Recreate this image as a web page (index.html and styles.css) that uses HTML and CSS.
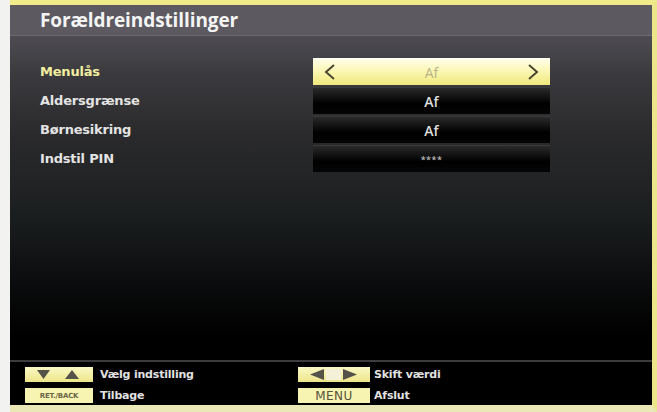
FILE: index.html
```html
<!DOCTYPE html>
<html lang="da">
<head>
<meta charset="utf-8">
<title>Forældreindstillinger</title>
<link rel="stylesheet" href="styles.css">
</head>
<body>
<div class="screen">
  <div class="edge"></div>
  <div class="panel">
    <div class="titlebar"><h1 class="title">Forældreindstillinger</h1></div>
    <div class="content">
      <div class="rows">
        <div class="row">
          <span class="label active">Menulås</span>
          <div class="value selected">
            <svg class="chev" width="14" height="18" viewBox="0 0 14 18"><path d="M11 2 L3 9 L11 16" fill="none" stroke="#4a4630" stroke-width="2"/></svg>
            <span class="vtext">Af</span>
            <svg class="chev" width="14" height="18" viewBox="0 0 14 18"><path d="M3 2 L11 9 L3 16" fill="none" stroke="#4a4630" stroke-width="2"/></svg>
          </div>
        </div>
        <div class="row">
          <span class="label">Aldersgrænse</span>
          <div class="value"><span class="vtext">Af</span></div>
        </div>
        <div class="row">
          <span class="label">Børnesikring</span>
          <div class="value"><span class="vtext">Af</span></div>
        </div>
        <div class="row">
          <span class="label">Indstil PIN</span>
          <div class="value"><span class="vtext pin">****</span></div>
        </div>
      </div>
    </div>
    <div class="footer">
      <div class="hint">
        <span class="key key-arrows">
          <svg width="60" height="13" viewBox="0 0 60 13"><path d="M8 2 L21 2 L14.5 11 Z" fill="#55524a"/><path d="M36 11 L50 11 L43 2 Z" fill="#55524a"/></svg>
        </span>
        <span class="htext">Vælg indstilling</span>
      </div>
      <div class="hint">
        <span class="key key-arrows">
          <svg width="62" height="13" viewBox="0 0 62 13"><path d="M7 6.5 L21 1 L21 12 Z" fill="#55524a"/><rect x="23" y="1" width="15" height="11" fill="#f4f1d8"/><path d="M54 6.5 L40 1 L40 12 Z" fill="#55524a"/></svg>
        </span>
        <span class="htext">Skift værdi</span>
      </div>
      <div class="hint">
        <span class="key key-text key-back">RET./BACK</span>
        <span class="htext">Tilbage</span>
      </div>
      <div class="hint">
        <span class="key key-text key-menu">MENU</span>
        <span class="htext">Afslut</span>
      </div>
    </div>
  </div>
</div>
</body>
</html>
```
FILE: styles.css
```css
html, body {
  margin: 0;
  padding: 0;
  background: #f3f3f1;
}
.screen {
  display: flex;
  width: 657px;
  height: 412px;
  font-family: "Open Sans", "DejaVu Sans", sans-serif;
}
.edge {
  width: 10px;
  flex: none;
  background: #f2f2f0;
}
.panel {
  flex: 1;
  display: flex;
  flex-direction: column;
  border-top: 5px solid #f0ea8a;
  border-right: 5px solid #ece68a;
  border-bottom: 7px solid #ebe8b8;
  background: #000;
}
.titlebar {
  height: 30px;
  flex: none;
  background: #5c5a60;
  border-bottom: 1px solid #6c6a70;
  display: flex;
  align-items: center;
  padding-left: 30px;
}
.title {
  margin: 0;
  font-size: 19px;
  font-weight: 700;
  color: #f4f4f4;
  letter-spacing: -0.1px;
}
.content {
  flex: 1;
  background: linear-gradient(#4e4c52 0px, #3a393d 40px, #2a2a2c 100px, #1b1e1f 180px, #0a0b0c 250px, #000 300px);
  padding-top: 22px;
  padding-left: 30px;
}
.rows {
  display: flex;
  flex-direction: column;
  gap: 2px;
}
.row {
  display: flex;
  align-items: center;
  height: 27px;
}
.label {
  width: 273px;
  font-family: "DejaVu Sans", sans-serif;
  font-size: 13px;
  font-weight: 700;
  color: #e4e4e4;
  letter-spacing: -0.2px;
}
.label.active {
  color: #f2eea0;
}
.value {
  width: 237px;
  height: 27px;
  display: flex;
  align-items: center;
  justify-content: center;
  background: linear-gradient(#2a2a2a, #000 60%, #050505);
  border-top: 1px solid #3a3a3a;
  box-sizing: border-box;
}
.value.selected {
  justify-content: space-between;
  padding: 0 10px;
  background: linear-gradient(#fffde8, #fbf6b0 50%, #f0e87c);
  border-top: 1px solid #fff;
}
.vtext {
  font-size: 14px;
  font-weight: 600;
  color: #dedede;
}
.selected .vtext {
  color: #b8b488;
  font-weight: 400;
}
.pin {
  font-size: 9px;
  color: #bbb;
  letter-spacing: 0.5px;
}
.chev {
  display: block;
}
.footer {
  height: 45px;
  flex: none;
  border-top: 2px solid #3c3c3e;
  background: #000;
  display: grid;
  grid-template-columns: 273px 1fr;
  grid-template-rows: 17px 17px;
  row-gap: 4px;
  padding: 4px 0 0 15px;
  box-sizing: border-box;
}
.hint {
  display: flex;
  align-items: center;
}
.key {
  height: 15px;
  background: #f7f3b0;
  display: flex;
  align-items: center;
  justify-content: center;
  margin-right: 7px;
}
.key-arrows {
  width: 68px;
  background: linear-gradient(#fbf8c4, #ede68a);
}
.key + .htext {
  margin-left: 0;
}
.hint:nth-child(2) .key {
  width: 72px;
  margin-right: 4px;
}
.key-text {
  font-family: "DejaVu Sans", sans-serif;
  font-weight: 700;
  color: #6a6648;
}
.key-back {
  width: 68px;
  font-size: 7px;
  letter-spacing: -0.2px;
}
.key-menu {
  width: 72px;
  font-size: 12px;
  letter-spacing: 0.5px;
  font-weight: 400;
  color: #55523c;
  margin-right: 4px;
}
.htext {
  font-family: "DejaVu Sans", sans-serif;
  font-size: 11px;
  font-weight: 700;
  color: #e2e2e2;
  letter-spacing: -0.2px;
}
```
